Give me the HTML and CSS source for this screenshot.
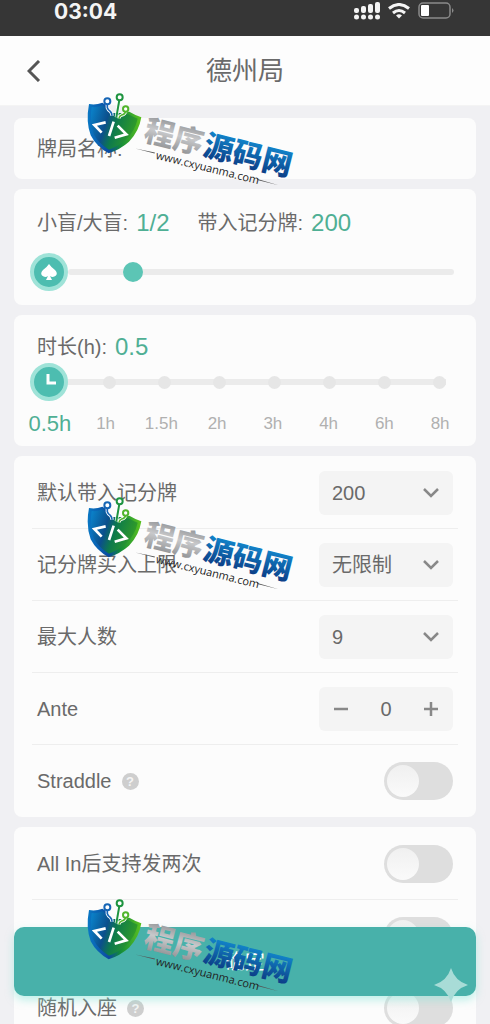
FILE: index.html
```html
<!DOCTYPE html>
<html lang="zh-CN">
<head>
    <meta charset="UTF-8">
    <meta name="viewport" content="width=device-width, initial-scale=1.0">
    <title>德州局</title>
    <link rel="stylesheet" href="styles.css">
</head>
<body>
    <svg class="defs" width="0" height="0" aria-hidden="true">
        <defs>
            <linearGradient id="shieldFill" x1="0" y1="0" x2="1" y2="0.3">
                <stop offset="0" stop-color="#0a86cf"/>
                <stop offset="0.4" stop-color="#0b4f8c"/>
                <stop offset="0.6" stop-color="#0d7a4c"/>
                <stop offset="1" stop-color="#2f9a2a"/>
            </linearGradient>
            <linearGradient id="shieldEdge" x1="0" y1="0" x2="1" y2="0">
                <stop offset="0" stop-color="#0a78c4"/>
                <stop offset="0.4" stop-color="#0b4aa0"/>
                <stop offset="0.6" stop-color="#128a3a"/>
                <stop offset="1" stop-color="#5cc21f"/>
            </linearGradient>
            <linearGradient id="silver" x1="0" y1="0" x2="0" y2="1">
                <stop offset="0" stop-color="#77797c"/>
                <stop offset="0.5" stop-color="#c8c9cb"/>
                <stop offset="1" stop-color="#808285"/>
            </linearGradient>
            <linearGradient id="blue" x1="0" y1="0" x2="0" y2="1">
                <stop offset="0.2" stop-color="#1286cc"/>
                <stop offset="1" stop-color="#0a2f78"/>
            </linearGradient>
            <symbol id="shield" viewBox="0 0 210 210">
                <path d="M42 57 Q62 61 82 53 L90 58 L112 84 L146 84 L163 80 Q180 90 199 97 Q192 140 162 170 Q136 193 101 205 Q64 184 47 151 Q32 110 42 57Z" fill="url(#shieldEdge)"/>
                <path d="M50 66 Q68 68 84 61 L112 92 L160 88 Q174 96 188 101 Q180 138 153 163 Q130 184 102 194 Q71 176 56 147 Q43 110 50 66Z" fill="url(#shieldFill)"/>
                <path d="M97 56 V68 Q99 74 106 79 Q111 84 111 92 M133 45 L124 97 M151 79 Q151 88 140 90 Q133 92 132 100" fill="none" stroke="#fff" stroke-width="10"/>
                <path d="M97 56 V68 Q99 74 106 79 Q111 84 111 92" fill="none" stroke="#1565b5" stroke-width="5"/>
                <path d="M133 45 L124 97" fill="none" stroke="#1e9440" stroke-width="6"/>
                <path d="M151 79 Q151 88 140 90 Q133 92 132 100" fill="none" stroke="#51b52c" stroke-width="5"/>
                <circle cx="97" cy="49" r="9" fill="#fff" stroke="#1565b5" stroke-width="6"/>
                <circle cx="134" cy="37" r="9" fill="#fff" stroke="#1e9440" stroke-width="6"/>
                <circle cx="152" cy="72" r="8" fill="#fff" stroke="#51b52c" stroke-width="6"/>
                <path d="M92 112 L58 120 L80 143 M116 110 L102 153 M128 122 L154 148 L119 158" fill="none" stroke="#fff" stroke-width="8"/>
            </symbol>
        </defs>
    </svg>

    <div class="app">
        <div class="status-bar">
            <span class="time">03:04</span>
            <div class="status-icons">
                <svg width="26" height="18" viewBox="0 0 26 18" fill="#f4f4f4" aria-hidden="true">
                    <rect x="0" y="6" width="5" height="5" rx="2"/>
                    <rect x="7" y="4" width="5" height="7" rx="2"/>
                    <rect x="14" y="2" width="5" height="9" rx="2"/>
                    <rect x="21" y="0" width="5" height="11" rx="2"/>
                    <circle cx="2.5" cy="15" r="2.5"/>
                    <circle cx="9.5" cy="15" r="2.5"/>
                    <circle cx="16.5" cy="15" r="2.5"/>
                    <circle cx="23.5" cy="15" r="2.5"/>
                </svg>
                <svg width="22" height="16" viewBox="0 0 22 16" fill="none" stroke="#f4f4f4" stroke-width="3" aria-hidden="true">
                    <path d="M1 5.5 Q11 -2.5 21 5.5"/>
                    <path d="M5 10 Q11 5 17 10"/>
                    <path d="M8 12.5 Q11 10 14 12.5 L11 15.5Z" fill="#f4f4f4" stroke="none"/>
                </svg>
                <svg width="36" height="18" viewBox="0 0 36 18" aria-hidden="true">
                    <rect x="1" y="1" width="31" height="15" rx="4" fill="none" stroke="#8a8a8a" stroke-width="1.5"/>
                    <rect x="3" y="3" width="8" height="11" rx="1" fill="#fff"/>
                    <path d="M34 6 Q37 8.500 34 11Z" fill="#8a8a8a"/>
                </svg>
            </div>
        </div>

        <header class="nav">
            <button class="back" type="button" aria-label="返回">
                <svg width="14" height="22" viewBox="0 0 14 22" fill="none" stroke="#555" stroke-width="3" aria-hidden="true"><path d="M12 1 L2 11 L12 21"/></svg>
            </button>
            <h1>德州局</h1>
        </header>

        <main class="content">
            <section class="card name-card">
                <label for="gameName">牌局名称:</label>
                <input type="text" id="gameName">
            </section>

            <section class="card blind-card">
                <div class="summary">
                    <label for="blinds">小盲/大盲:</label>
                    <span class="value">1/2</span>
                    <span class="second">带入记分牌:</span>
                    <span class="value">200</span>
                </div>
                <div class="slider">
                    <span class="slider-icon">
                        <svg width="18" height="18" viewBox="0 0 18 18" fill="#fff" aria-hidden="true"><path d="M9 1 Q11 4 15 7 Q18 10 16 12.500 Q13 15 10 13 L12 17 H6 L8 13 Q5 15 2 12.500 Q0 10 3 7 Q7 4 9 1Z"/></svg>
                    </span>
                    <input class="blind-range" type="range" id="blinds" min="0" max="100" value="15">
                </div>
            </section>

            <section class="card time-card">
                <div class="summary">
                    <label for="duration">时长(h):</label>
                    <span class="value">0.5</span>
                </div>
                <div class="steps">
                    <div class="stops"><i></i><i></i><i></i><i></i><i></i><i></i><i></i><i></i></div>
                    <input class="time-range" type="range" id="duration" min="0" max="7" value="0">
                </div>
                <div class="ticks">
                    <span class="active">0.5h</span>
                    <span>1h</span>
                    <span>1.5h</span>
                    <span>2h</span>
                    <span>3h</span>
                    <span>4h</span>
                    <span>6h</span>
                    <span>8h</span>
                </div>
            </section>

            <section class="card list-card">
                <div class="row">
                    <label for="buyIn">默认带入记分牌</label>
                    <select id="buyIn"><option>200</option></select>
                </div>
                <div class="row">
                    <label for="limit">记分牌买入上限</label>
                    <select id="limit"><option>无限制</option></select>
                </div>
                <div class="row">
                    <label for="players">最大人数</label>
                    <select id="players"><option>9</option></select>
                </div>
                <div class="row">
                    <label for="ante">Ante</label>
                    <div class="stepper">
                        <button type="button" aria-label="减少">
                            <svg width="16" height="16" viewBox="0 0 16 16" stroke="#888" stroke-width="2.500" aria-hidden="true"><path d="M1 8 H15"/></svg>
                        </button>
                        <input type="text" id="ante" value="0">
                        <button type="button" aria-label="增加">
                            <svg width="16" height="16" viewBox="0 0 16 16" stroke="#888" stroke-width="2.500" aria-hidden="true"><path d="M1 8 H15 M8 1 V15"/></svg>
                        </button>
                    </div>
                </div>
                <div class="row">
                    <label for="straddle">Straddle</label>
                    <span class="help">?</span>
                    <input class="switch" type="checkbox" id="straddle">
                </div>
            </section>

            <section class="card list-card">
                <div class="row">
                    <label for="runTwice">All In后支持发两次</label>
                    <input class="switch" type="checkbox" id="runTwice">
                </div>
                <div class="row">
                    <input class="switch" type="checkbox" aria-label="开关">
                </div>
                <div class="row">
                    <label for="randomSeat">随机入座</label>
                    <span class="help">?</span>
                    <input class="switch" type="checkbox" id="randomSeat">
                </div>
            </section>
        </main>

        <button class="submit" type="button">确定</button>

        <svg class="sparkle" width="34" height="34" viewBox="0 0 34 34" aria-hidden="true"><path d="M17 0 Q21 13 34 17 Q21 21 17 34 Q13 21 0 17 Q13 13 17 0Z" fill="#a8dcd7"/></svg>

        <svg class="watermark first" width="230" height="110" viewBox="0 0 230 110">
            <use href="#shield" width="70" height="70"/>
            <g transform="translate(67 57) rotate(14)">
                <text class="brand" y="-2" fill="url(#silver)">程序</text>
                <text class="brand" x="61" y="-2" fill="url(#blue)">源码网</text>
                <path d="M-5 8 L15 7 V8Z M121 8 L143 9 L121 9Z" fill="#555"/>
                <text class="site" x="17" y="13">www.cxyuanma.com</text>
            </g>
        </svg>
        <svg class="watermark second-mark" width="230" height="110" viewBox="0 0 230 110">
            <use href="#shield" width="70" height="70"/>
            <g transform="translate(67 57) rotate(14)">
                <text class="brand" y="-2" fill="url(#silver)">程序</text>
                <text class="brand" x="61" y="-2" fill="url(#blue)">源码网</text>
                <path d="M-5 8 L15 7 V8Z M121 8 L143 9 L121 9Z" fill="#555"/>
                <text class="site" x="17" y="13">www.cxyuanma.com</text>
            </g>
        </svg>
        <svg class="watermark third" width="230" height="110" viewBox="0 0 230 110">
            <use href="#shield" width="70" height="70"/>
            <g transform="translate(67 57) rotate(14)">
                <text class="brand" y="-2" fill="url(#silver)">程序</text>
                <text class="brand" x="61" y="-2" fill="url(#blue)">源码网</text>
                <path d="M-5 8 L15 7 V8Z M121 8 L143 9 L121 9Z" fill="#555"/>
                <text class="site" x="17" y="13">www.cxyuanma.com</text>
            </g>
        </svg>
    </div>
</body>
</html>
```
FILE: styles.css
```css
* {
    box-sizing: border-box;
}
body {
    margin: 0;
    font-family: "Liberation Sans", "Noto Sans CJK SC", sans-serif;
    font-size: 20px;
    line-height: 28px;
    color: #6a6a6a;
    background-color: #f0f0f3;
}
input,
select,
button {
    margin: 0;
    padding: 0;
    border: none;
    background: none;
    font: inherit;
    color: inherit;
}
.defs {
    position: absolute;
}
.app {
    position: relative;
    display: flex;
    flex-direction: column;
    height: 100vh;
    overflow: hidden;
}
.status-bar {
    flex: none;
    display: flex;
    justify-content: space-between;
    height: 36px;
    padding: 0 36px 0 54px;
    background-color: #363636;
}
.time {
    font-family: Inter, sans-serif;
    font-size: 21px;
    font-weight: 700;
    line-height: 24px;
    color: #f4f4f4;
}
.status-icons {
    display: flex;
    align-items: center;
    gap: 8px;
    height: 22px;
}
.nav {
    flex: none;
    display: grid;
    grid-template-columns: 40px 1fr 40px;
    align-items: center;
    height: 70px;
    padding: 0 14px;
    background-color: #fdfdfd;
    border-bottom: 1px solid #f4f4f4;
}
.back {
    display: flex;
    justify-content: center;
}
.nav h1 {
    margin: 0;
    text-align: center;
    font-size: 26px;
    font-weight: 400;
}
.content {
    flex: 1;
    display: flex;
    flex-direction: column;
    gap: 10px;
    min-height: 0;
    padding: 12px 14px;
    overflow: hidden;
}
.card {
    flex: none;
    padding: 0 18px;
    background-color: #fcfcfc;
    border-radius: 8px;
}
.name-card {
    display: flex;
    align-items: center;
    gap: 8px;
    height: 61px;
    padding: 0 23px;
}
.name-card input {
    flex: 1;
    min-width: 0;
}
.summary {
    display: flex;
    align-items: center;
    gap: 8px;
    padding: 0 5px;
}
.value {
    font-size: 24px;
    color: #4faf94;
}
.second {
    margin-left: 20px;
}

/* 滑块 */
.blind-card {
    padding: 20px 22px 14px 16px;
}
.blind-card .summary {
    padding: 0 7px;
}
.slider {
    display: flex;
    align-items: center;
    margin-top: 16px;
}
.slider-icon {
    display: flex;
    align-items: center;
    justify-content: center;
    width: 38px;
    height: 38px;
    border: 4px solid #9fe3d8;
    border-radius: 50%;
    background-color: #4dbdb0;
}
input[type="range"] {
    appearance: none;
    flex: 1;
    min-width: 0;
}
.blind-range {
    height: 20px;
}
.blind-range::-webkit-slider-runnable-track {
    height: 6px;
    border-radius: 3px;
    background-color: #ebebeb;
}
.blind-range::-webkit-slider-thumb {
    appearance: none;
    width: 20px;
    height: 20px;
    margin-top: -7px;
    border-radius: 50%;
    background-color: #5cc5b5;
}
.time-card {
    padding: 18px 8px 8px;
}
.time-card .summary {
    padding: 0 15px;
}
.steps {
    display: grid;
    align-items: center;
    margin: 2px 22px 0 8px;
}
.stops {
    grid-area: 1 / 1;
    display: flex;
    justify-content: space-between;
    margin-left: 18px;
    background: linear-gradient(#ebebeb, #ebebeb) center / 100% 6px no-repeat;
}
.stops i {
    width: 13px;
    height: 13px;
    border-radius: 50%;
    background-color: #e6e6e6;
}
.time-range {
    grid-area: 1 / 1;
    height: 38px;
}
.time-range::-webkit-slider-thumb {
    appearance: none;
    width: 38px;
    height: 38px;
    border: 4px solid #9fe3d8;
    border-radius: 50%;
    background: #4dbdb0 url("data:image/svg+xml,%3Csvg xmlns='http://www.w3.org/2000/svg' viewBox='0 0 30 30'%3E%3Cpath d='M14 7V16H22' fill='none' stroke='white' stroke-width='3'/%3E%3C/svg%3E") center / 30px 30px no-repeat;
}
.ticks {
    display: grid;
    grid-template-columns: repeat(8, 1fr);
    align-items: center;
    margin-top: 9px;
    font-size: 17px;
    text-align: center;
    color: #b0b0b0;
}
.ticks .active {
    font-size: 22px;
    color: #4faf94;
}

/* 设置项 */
.list-card {
    padding-top: 1px;
}
.row {
    display: flex;
    align-items: center;
    height: 72px;
    padding: 0 5px;
    border-bottom: 1px solid #eeeeee;
}
.row:last-child {
    border-bottom: none;
}
.row select,
.stepper,
.switch {
    margin-left: auto;
}
.row select {
    appearance: none;
    width: 134px;
    height: 44px;
    padding: 0 13px;
    border-radius: 6px;
    background: #f4f4f4 url("data:image/svg+xml,%3Csvg xmlns='http://www.w3.org/2000/svg' viewBox='0 0 16 10'%3E%3Cpath d='M1 1L8 8L15 1' fill='none' stroke='%23888' stroke-width='2.5'/%3E%3C/svg%3E") right 14px center / 16px 10px no-repeat;
}
.stepper {
    display: flex;
    width: 134px;
    height: 44px;
    border-radius: 6px;
    background-color: #f4f4f4;
}
.stepper button {
    display: flex;
    align-items: center;
    justify-content: center;
    width: 44px;
}
.stepper input {
    flex: 1;
    min-width: 0;
    text-align: center;
}
.help {
    width: 17px;
    height: 17px;
    margin-left: 10px;
    border-radius: 50%;
    background-color: #cecece;
    color: #f4f4f4;
    font-size: 13px;
    font-weight: 700;
    line-height: 17px;
    text-align: center;
}
.switch {
    appearance: none;
    width: 69px;
    height: 38px;
    padding: 3px;
    border-radius: 19px;
    background-color: #dedede;
}
.switch::before {
    content: "";
    display: block;
    width: 32px;
    height: 32px;
    border-radius: 50%;
    background: linear-gradient(#f0f0f0, #fafafa);
}
.switch:checked {
    background-color: #48b1aa;
}
.switch:checked::before {
    margin-left: auto;
}

/* 底部按钮 */
.submit {
    position: absolute;
    left: 14px;
    right: 14px;
    bottom: 28px;
    height: 69px;
    border-radius: 10px;
    background-color: #48b1aa;
    box-shadow: 0 4px 8px rgba(130, 230, 215, 0.5);
    color: #fff;
}
.sparkle {
    position: absolute;
    right: 22px;
    bottom: 22px;
}
.watermark {
    position: absolute;
    left: 75px;
    pointer-events: none;
}
.first {
    top: 85px;
}
.second-mark {
    top: 489px;
}
.third {
    top: 891px;
}
.brand {
    font-family: "Noto Sans CJK SC", sans-serif;
    font-size: 30px;
    font-weight: 900;
}
.site {
    font-family: "Open Sans", sans-serif;
    font-size: 11px;
    fill: #222;
}
```
